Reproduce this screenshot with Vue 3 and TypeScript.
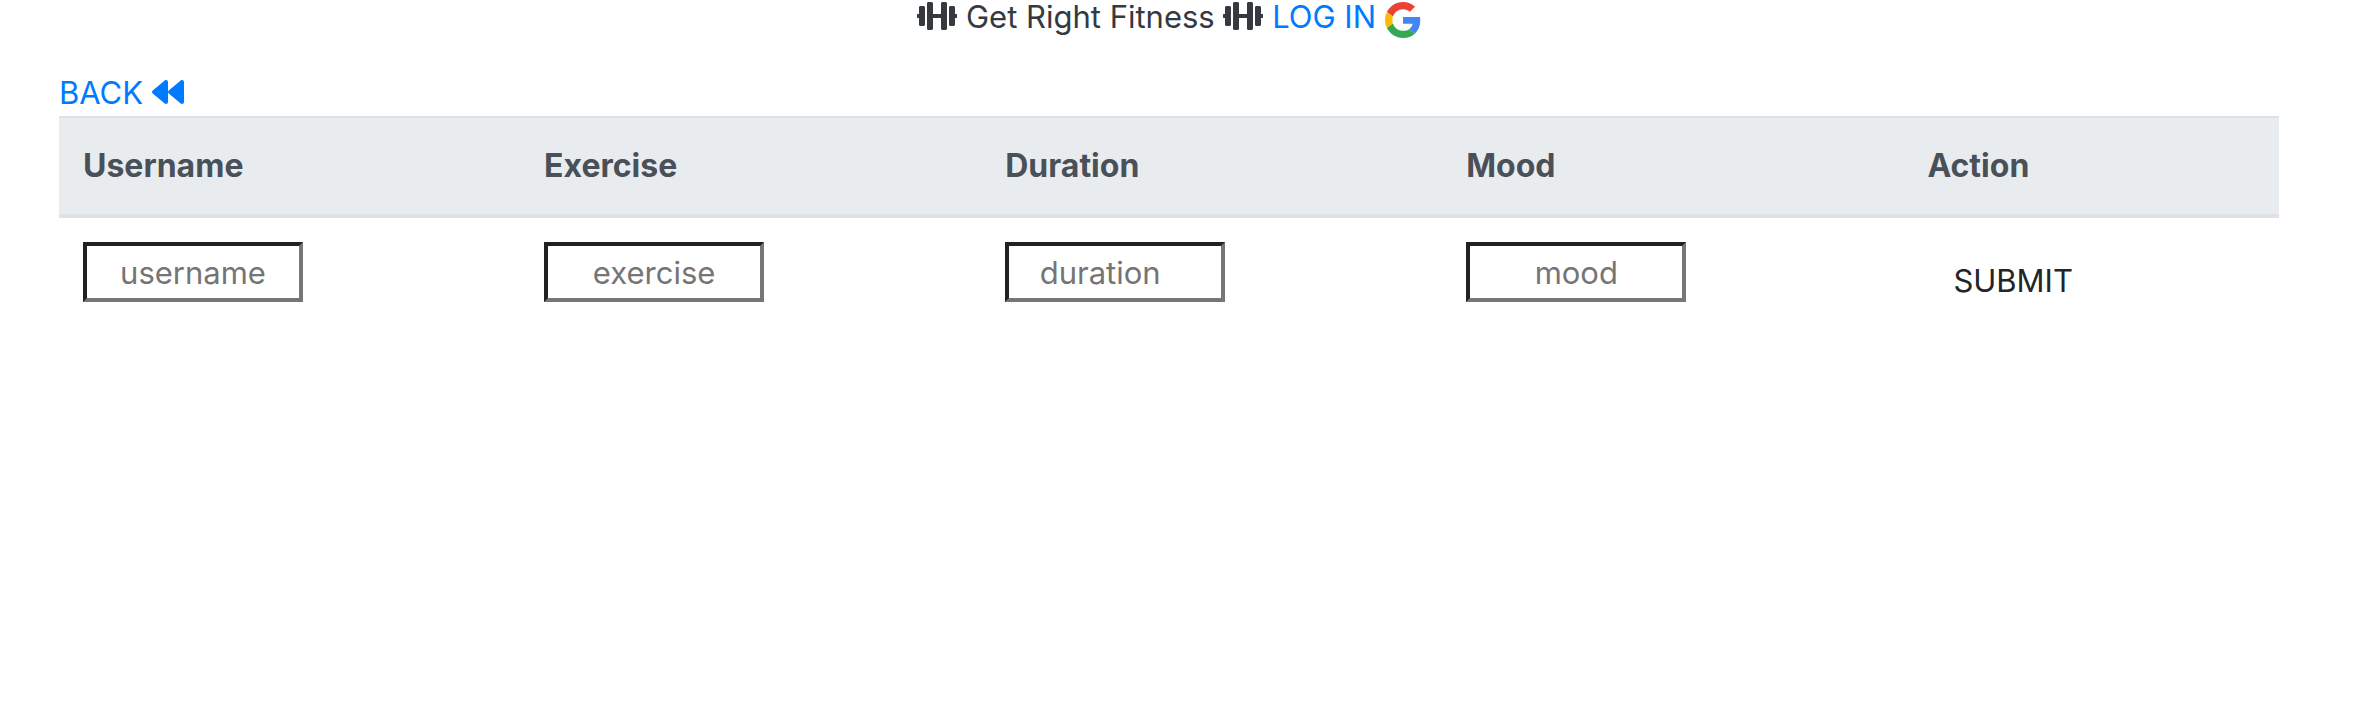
<script setup lang="ts">
import { reactive } from 'vue'

interface Field {
  key: 'username' | 'exercise' | 'duration' | 'mood'
  label: string
  type: 'text' | 'number'
}

const fields: Field[] = [
  { key: 'username', label: 'Username', type: 'text' },
  { key: 'exercise', label: 'Exercise', type: 'text' },
  { key: 'duration', label: 'Duration', type: 'number' },
  { key: 'mood', label: 'Mood', type: 'text' },
]

const entry = reactive<Record<Field['key'], string>>({
  username: '',
  exercise: '',
  duration: '',
  mood: '',
})

const dumbbell =
  'M104 96H56c-13.3 0-24 10.7-24 24v104H8c-4.4 0-8 3.6-8 8v48c0 4.4 3.6 8 8 8h24v104c0 13.3 10.7 24 24 24h48c13.3 0 24-10.7 24-24V120c0-13.3-10.7-24-24-24zm528 128h-24V120c0-13.3-10.7-24-24-24h-48c-13.3 0-24 10.7-24 24v272c0 13.3 10.7 24 24 24h48c13.3 0 24-10.7 24-24V288h24c4.4 0 8-3.6 8-8v-48c0-4.4-3.6-8-8-8zM456 32h-48c-13.3 0-24 10.7-24 24v168H256V56c0-13.3-10.7-24-24-24h-48c-13.3 0-24 10.7-24 24v400c0 13.3 10.7 24 24 24h48c13.3 0 24-10.7 24-24V288h128v168c0 13.3 10.7 24 24 24h48c13.3 0 24-10.7 24-24V56c0-13.3-10.7-24-24-24z'
</script>

<template>
  <div class="page">
    <header class="brand">
      <svg class="icon dumbbell" viewBox="0 0 640 512" aria-hidden="true"><path :d="dumbbell" /></svg>
      Get Right Fitness
      <svg class="icon dumbbell" viewBox="0 0 640 512" aria-hidden="true"><path :d="dumbbell" /></svg>
      {{ ' ' }}<a href="#login">LOG IN
        <svg class="google" viewBox="0 0 48 48" aria-hidden="true">
          <path fill="#EA4335" d="M24 9.5c3.54 0 6.71 1.22 9.21 3.6l6.85-6.85C35.9 2.38 30.47 0 24 0 14.62 0 6.51 5.38 2.56 13.22l7.98 6.19C12.43 13.72 17.74 9.5 24 9.5z" />
          <path fill="#4285F4" d="M46.98 24.55c0-1.57-.15-3.09-.38-4.55H24v9.02h12.94c-.58 2.96-2.26 5.48-4.78 7.18l7.73 6c4.51-4.18 7.09-10.36 7.09-17.65z" />
          <path fill="#FBBC05" d="M10.53 28.59c-.48-1.45-.76-2.99-.76-4.59s.27-3.14.76-4.59l-7.98-6.19C.92 16.46 0 20.12 0 24c0 3.88.92 7.54 2.56 10.78l7.97-6.19z" />
          <path fill="#34A853" d="M24 48c6.48 0 11.93-2.13 15.89-5.81l-7.73-6c-2.15 1.45-4.92 2.3-8.16 2.3-6.26 0-11.57-4.22-13.47-9.91l-7.98 6.19C6.51 42.62 14.62 48 24 48z" />
        </svg>
      </a>
    </header>

    <nav class="back">
      <a href="#back">BACK
        <svg class="icon backward" viewBox="0 0 512 512" aria-hidden="true">
          <path d="M11.5 280.6l192 160c20.6 17.2 52.5 2.8 52.5-24.6V96c0-27.4-31.8-41.8-52.5-24.6l-192 160c-15.3 12.8-15.3 36.4 0 49.2zm256 0l192 160c20.6 17.2 52.5 2.8 52.5-24.6V96c0-27.4-31.8-41.8-52.5-24.6l-192 160c-15.3 12.8-15.3 36.4 0 49.2z" />
        </svg>
      </a>
    </nav>

    <form @submit.prevent>
      <table>
        <colgroup>
          <col v-for="f in fields" :key="f.key" class="field-col" />
          <col />
        </colgroup>
        <thead>
          <tr>
            <th v-for="f in fields" :key="f.key" scope="col">
              <label :for="f.key">{{ f.label }}</label>
            </th>
            <th scope="col">Action</th>
          </tr>
        </thead>
        <tbody>
          <tr>
            <td v-for="f in fields" :key="f.key">
              <input :id="f.key" v-model="entry[f.key]" :type="f.type" :placeholder="f.key" />
            </td>
            <td><button type="submit">SUBMIT</button></td>
          </tr>
        </tbody>
      </table>
    </form>
  </div>
</template>

<style>
body {
  margin: 0;
  background: #fff;
}
</style>

<style scoped>
.page {
  padding: 0 75px 0 59px;
  font-family: Inter, 'Liberation Sans', sans-serif;
  font-size: 31px;
  line-height: 48px;
  color: #212529;
}

a {
  color: #007bff;
  text-decoration: none;
}

.icon {
  height: 32px;
  fill: currentColor;
  vertical-align: -4px;
}

.dumbbell {
  width: 40px;
}

.backward {
  width: 32px;
}

.google {
  width: 36px;
  height: 36px;
  vertical-align: -10px;
}

.brand {
  height: 70px;
  line-height: 32px;
  text-align: center;
  color: #343a40;
}

.back {
  height: 46px;
  line-height: 46px;
}

table {
  width: 100%;
  table-layout: fixed;
  border-collapse: separate;
  border-spacing: 0;
}

.field-col {
  width: 20.77%;
}

th,
td {
  padding: 24px;
  text-align: left;
  vertical-align: top;
}

th {
  font-size: 32px;
  font-weight: 700;
  color: #495057;
  background: #e9ecef;
  border-top: 2px solid #dee2e6;
  border-bottom: 4px solid #dee2e6;
}

input {
  display: block;
  box-sizing: border-box;
  width: 220px;
  height: 60px;
  margin: 0;
  padding: 2px 4px;
  font: inherit;
  text-align: center;
  color: #212529;
  background: #fff;
  border: 4px solid;
  border-color: #212121 #767676 #767676 #212121;
  border-radius: 0;
}

input::placeholder {
  color: #757575;
}

input[type='number'] {
  padding-right: 34px;
  appearance: textfield;
}

input[type='number']::-webkit-inner-spin-button {
  margin: 0;
  appearance: none;
}

button {
  display: block;
  padding: 13px 24px 11px;
  font: inherit;
  color: #212529;
  background: transparent;
  border: 2px solid transparent;
  border-radius: 8px;
  cursor: pointer;
}
</style>
